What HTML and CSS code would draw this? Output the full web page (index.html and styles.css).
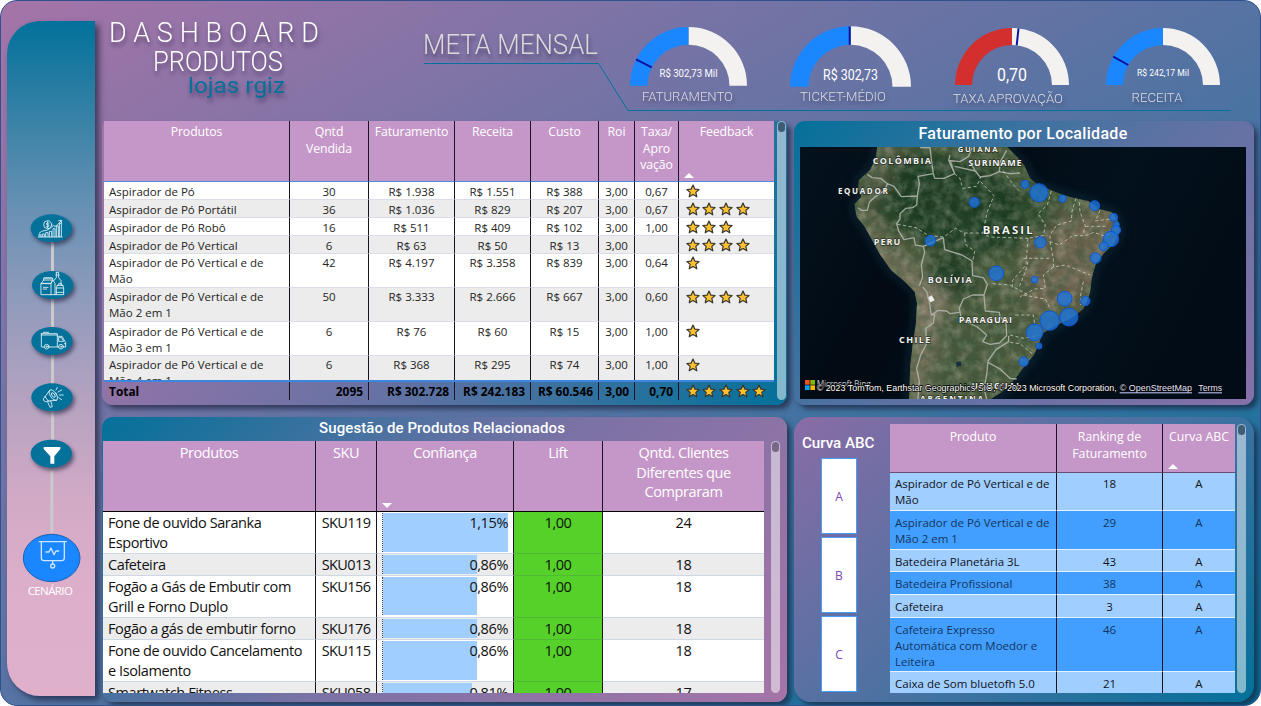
FILE: index.html
```html
<!DOCTYPE html>
<html lang="pt-BR">
<head>
<meta charset="utf-8">
<title>Dashboard Produtos</title>
<link rel="stylesheet" href="styles.css">
</head>
<body>
<svg class="defs" width="0" height="0" aria-hidden="true">
  <symbol id="star" viewBox="0 0 14 14"><path d="M7 1 8.800 5.100 13.100 5.500 9.800 8.400 10.800 12.800 7 10.500 3.200 12.800 4.200 8.400.9 5.500 5.200 5.100Z" fill="#fdc02f" stroke="#37352f" stroke-width="1.2" stroke-linejoin="round"/></symbol>
</svg>
<div class="board">
  <nav class="side">
    <svg width="88" height="52" viewBox="21 612 264 156"><path class="link" d="M157.500 700V768"/><g transform="translate(0 600)"><ellipse class="bub" cx="154" cy="85" rx="62" ry="42"/><g class="ico"><circle cx="143" cy="74" r="12"/><path d="M147 70q-4-4-7 0t3 4 3 5-7 0M143 65v18M117 100q8-8 15-8t12-3 16-12l8 2 15-16M176 62l9-1-1 9M117 110v-6h6v6M127 110v-8h6v8M137 110v-12h7v12M148 110V94h7v16M159 110V86h6v24M169 110V78h6v32M178 110V70h6v40M115 111h71"/></g></g></svg>
    <svg width="88" height="56" viewBox="21 768 264 168"><path class="link" d="M157.500 768V936"/><g transform="translate(0 600)"><ellipse class="bub" cx="158" cy="255" rx="62" ry="42"/><g class="ico"><path d="M124 250l7-10h27l-5 10zM124 250h29v34h-29zM153 250l5-10 7 10v34h-12M131 240v-6h27v6M134 234h20M130 262h14M130 267h10M169 217h7v16l7 9v12M169 217v16l-8 9M168 225h9M172 256h17M172 256l-3 7v21h22v-21l-3-7M170 264h21M170 277h21M176 256v-5h9v5M165 284h4"/></g></g></svg>
    <svg width="88" height="56" viewBox="21 936 264 168"><path class="link" d="M157.500 936V1104"/><g transform="translate(0 600)"><ellipse class="bub" cx="156" cy="423" rx="62" ry="42"/><g class="ico"><path d="M124 401h48v40h-24M133 441h-9v-40M124 405h48M130 397h16M172 409h14l8 14 3 4v14h-6M172 441h4M177 413h8l6 11h-14zM193 431h4"/><circle cx="140" cy="440" r="7"/><circle cx="140" cy="440" r="2"/><circle cx="183" cy="440" r="7"/><circle cx="183" cy="440" r="2"/></g></g></svg>
    <svg width="88" height="57" viewBox="21 1104 264 171"><path class="link" d="M157.500 1104V1275"/><g transform="translate(0 1110)"><ellipse class="bub" cx="156" cy="82" rx="62" ry="42"/><g class="ico"><ellipse cx="160" cy="75" rx="9" ry="18" transform="rotate(-35 160 75)"/><ellipse cx="160" cy="75" rx="4" ry="8" transform="rotate(-35 160 75)"/><path d="M149 61L135 80M170 91l-24 2M135 80q-8 6-4 12t15 1M135 80l10 13M143 96l7 16 7-2-5-17M168 60l4-8M174 66l11-6M178 75h12M176 83l9 6"/></g></g></svg>
    <svg width="88" height="61" viewBox="21 1275 264 183"><path class="link" d="M157.500 1275V1320M155.500 1412V1458"/><g transform="translate(0 1110)"><ellipse class="bub" cx="154" cy="251" rx="62" ry="42"/><path d="M131 231h50v6l-18 22v22h-12v-22l-20-22z" fill="#fff"/></g></svg>
    <svg width="88" height="98" viewBox="21 1458 264 294"><path class="link" d="M155.500 1458V1598"/><g transform="translate(0 1110)"><ellipse class="bub on" cx="155" cy="564" rx="85" ry="71"/><g class="ico big"><path d="M118 515h81M124 515v49q0 8 8 8h53q8 0 8-8v-49M138 546h9l6-12 9 20 6-11h8M158 572v10"/><circle cx="158" cy="588" r="6"/></g></g></svg>
    <span>CENÁRIO</span>
  </nav>

  <header class="top">
    <svg class="brand" width="322" height="121" viewBox="102 0 322 121">
      <text x="109" y="42" textLength="210" font-size="27">DASHBOARD</text>
      <text x="153" y="70.500" textLength="130" lengthAdjust="spacingAndGlyphs" font-size="27">PRODUTOS</text>
      <text class="shop" x="188" y="93" textLength="97" lengthAdjust="spacingAndGlyphs" font-size="22.500">lojas rgiz</text>
    </svg>
    <svg class="brand" width="200" height="121" viewBox="424 0 200 121"><text class="meta" x="423" y="53.500" textLength="175" lengthAdjust="spacingAndGlyphs" font-size="27">META MENSAL</text></svg>
    <svg width="146" height="121" viewBox="624 0 146 121">
      <path fill="#f3f2f1" d="M688.500 27A58.500 58.500 0 0 1 747 85.700H729.500A41 41 0 0 0 688.500 44.700Z"/>
      <path fill="#1a86ff" d="M630 85.700A58.500 58.500 0 0 1 688.500 27V44.700A41 41 0 0 0 647.500 85.700Z"/>
      <path class="goal" d="M636 59.300 651.700 67.300"/>
      <text class="val" x="659.500" y="76.500" textLength="58" lengthAdjust="spacingAndGlyphs" font-size="10.500">R$ 302,73 Mil</text>
      <text class="cap" x="642" y="101" textLength="91" lengthAdjust="spacingAndGlyphs">FATURAMENTO</text>
    </svg>
    <svg width="160" height="121" viewBox="770 0 160 121">
      <path fill="#f3f2f1" d="M850.500 26.200A60.500 60.500 0 0 1 911 86.700H892.500A42 42 0 0 0 850.500 44.700Z"/>
      <path fill="#1a86ff" d="M790 86.700A60.500 60.500 0 0 1 850.500 26.200V44.700A42 42 0 0 0 808.500 86.700Z"/>
      <path class="goal" d="M849.700 26.500V44.700"/>
      <text class="val" x="823" y="80" textLength="55" lengthAdjust="spacingAndGlyphs" font-size="14">R$ 302,73</text>
      <text class="cap" x="800" y="101" textLength="86" lengthAdjust="spacingAndGlyphs">TICKET-MÉDIO</text>
    </svg>
    <svg width="155" height="121" viewBox="930 0 155 121">
      <path fill="#f3f2f1" d="M1012 28A57 57 0 0 1 1069 85H1052A40 40 0 0 0 1012 45Z"/>
      <path fill="#d32f2f" d="M955 85A57 57 0 0 1 1012 28V45A40 40 0 0 0 972 85Z"/>
      <path class="goal" d="M1018.500 28.500 1016.700 45.300"/>
      <text class="val" x="997" y="81" textLength="30" lengthAdjust="spacingAndGlyphs" font-size="18.500">0,70</text>
      <text class="cap" x="953" y="103" textLength="110" lengthAdjust="spacingAndGlyphs">TAXA APROVAÇÃO</text>
    </svg>
    <svg width="145" height="121" viewBox="1085 0 145 121">
      <path fill="#f3f2f1" d="M1163 28A57 57 0 0 1 1220 85H1203A40 40 0 0 0 1163 45Z"/>
      <path fill="#1a86ff" d="M1106 85A57 57 0 0 1 1163 28V45A40 40 0 0 0 1123 85Z"/>
      <path class="goal" d="M1113.300 56.700 1128.300 65"/>
      <text class="val" x="1137" y="76" textLength="52" lengthAdjust="spacingAndGlyphs" font-size="9.500">R$ 242,17 Mil</text>
      <text class="cap" x="1131.500" y="102" textLength="51" lengthAdjust="spacingAndGlyphs">RECEITA</text>
    </svg>
    <svg class="rule" width="810" height="50" viewBox="424 62 810 50"><path d="M424 63.500H598.500L628 110.500H1231" fill="none" stroke="#05719b"/></svg>
  </header>

  <section class="panel p1">
    <div class="tablebox">
      <table class="t1 head">
        <colgroup><col class="a1"><col class="a2"><col class="a3"><col class="a4"><col class="a5"><col class="a6"><col class="a7"><col class="a8"></colgroup>
        <tr><th>Produtos</th><th>Qntd<br>Vendida</th><th>Faturamento</th><th>Receita</th><th>Custo</th><th>Roi</th><th>Taxa/<br>Apro<br>vação</th><th class="sorted">Feedback<i class="up"></i></th></tr>
      </table>
      <div class="scroll">
      <table class="t1">
        <colgroup><col class="a1"><col class="a2"><col class="a3"><col class="a4"><col class="a5"><col class="a6"><col class="a7"><col class="a8"></colgroup>
        <tr class="h18"><td>Aspirador de Pó</td><td>30</td><td>R$ 1.938</td><td>R$ 1.551</td><td>R$ 388</td><td>3,00</td><td>0,67</td><td><div class="stars"><svg><use href="#star"/></svg></div></td></tr>
        <tr class="h18"><td>Aspirador de Pó Portátil</td><td>36</td><td>R$ 1.036</td><td>R$ 829</td><td>R$ 207</td><td>3,00</td><td>0,67</td><td><div class="stars"><svg><use href="#star"/></svg><svg><use href="#star"/></svg><svg><use href="#star"/></svg><svg><use href="#star"/></svg></div></td></tr>
        <tr class="h18"><td>Aspirador de Pó Robô</td><td>16</td><td>R$ 511</td><td>R$ 409</td><td>R$ 102</td><td>3,00</td><td>1,00</td><td><div class="stars"><svg><use href="#star"/></svg><svg><use href="#star"/></svg><svg><use href="#star"/></svg></div></td></tr>
        <tr class="h18"><td>Aspirador de Pó Vertical</td><td>6</td><td>R$ 63</td><td>R$ 50</td><td>R$ 13</td><td>3,00</td><td></td><td><div class="stars"><svg><use href="#star"/></svg><svg><use href="#star"/></svg><svg><use href="#star"/></svg><svg><use href="#star"/></svg></div></td></tr>
        <tr class="h34"><td>Aspirador de Pó Vertical e de<br>Mão</td><td>42</td><td>R$ 4.197</td><td>R$ 3.358</td><td>R$ 839</td><td>3,00</td><td>0,64</td><td><div class="stars"><svg><use href="#star"/></svg></div></td></tr>
        <tr class="h33"><td>Aspirador de Pó Vertical e de<br>Mão 2 em 1</td><td>50</td><td>R$ 3.333</td><td>R$ 2.666</td><td>R$ 667</td><td>3,00</td><td>0,60</td><td><div class="stars"><svg><use href="#star"/></svg><svg><use href="#star"/></svg><svg><use href="#star"/></svg><svg><use href="#star"/></svg></div></td></tr>
        <tr class="h34 low"><td>Aspirador de Pó Vertical e de<br>Mão 3 em 1</td><td>6</td><td>R$ 76</td><td>R$ 60</td><td>R$ 15</td><td>3,00</td><td>1,00</td><td><div class="stars"><svg><use href="#star"/></svg></div></td></tr>
        <tr class="h34"><td>Aspirador de Pó Vertical e de<br>Mão 4 em 1</td><td>6</td><td>R$ 368</td><td>R$ 295</td><td>R$ 74</td><td>3,00</td><td>1,00</td><td><div class="stars"><svg><use href="#star"/></svg></div></td></tr>
      </table>
      </div>
      <table class="t1 total">
        <colgroup><col class="a1"><col class="a2"><col class="a3"><col class="a4"><col class="a5"><col class="a6"><col class="a7"><col class="a8"></colgroup>
        <tr><td>Total</td><td>2095</td><td>R$ 302.728</td><td>R$ 242.183</td><td>R$ 60.546</td><td>3,00</td><td>0,70</td><td><div class="stars"><svg><use href="#star"/></svg><svg><use href="#star"/></svg><svg><use href="#star"/></svg><svg><use href="#star"/></svg><svg><use href="#star"/></svg></div></td></tr>
      </table>
    </div>
    <div class="bar"><b></b></div>
  </section>

  <section class="panel p2">
    <h2>Faturamento por Localidade</h2>
    <svg class="map" width="446" height="252" viewBox="30 96 1338 756">
      <defs>
        <linearGradient id="sea" x1="0" x2="1" y1="0" y2=".3"><stop offset="0" stop-color="#04121d"/><stop offset=".35" stop-color="#020a13"/><stop offset=".7" stop-color="#03111c"/><stop offset="1" stop-color="#020c16"/></linearGradient>
        <clipPath id="land"><path id="coast" d="M262 90 258 130 240 165 207 195 204 222 214 245 193 268 200 305 222 332 245 372 268 415 303 465 345 500 374 530 381 565 378 625 368 690 361 750 357 860H590L640 828 675 792 700 758 730 722 745 692 757 655 800 630 850 606 880 582 900 535 905 490 918 443 942 415 970 387 990 350 984 318 966 292 930 283 895 258 855 250 818 240 785 226 750 214 722 192 702 150 678 122 645 90Z"/></clipPath>
        <filter id="soft" x="-50%" y="-50%" width="200%" height="200%"><feGaussianBlur stdDeviation="24"/></filter>
        <filter id="shelf"><feGaussianBlur stdDeviation="12"/></filter>
        <filter id="grain" x="0" y="0" width="100%" height="100%"><feTurbulence type="fractalNoise" baseFrequency=".035" numOctaves="5" seed="6"/><feColorMatrix values="0 0 0 0 .62  0 0 0 0 .6  0 0 0 0 .47  1.300 0 0 0 -.5"/></filter>
        <filter id="shade" x="0" y="0" width="100%" height="100%"><feTurbulence type="fractalNoise" baseFrequency=".03" numOctaves="5" seed="15"/><feColorMatrix values="0 0 0 0 .04  0 0 0 0 .1  0 0 0 0 .05  0 2 0 0 -.75"/></filter>
      </defs>
      <rect x="30" y="96" width="1338" height="756" fill="url(#sea)"/>
      <use href="#coast" fill="none" stroke="#16394a" stroke-width="26" filter="url(#shelf)" opacity=".45"/>
      <g clip-path="url(#land)">
        <rect x="180" y="90" width="830" height="770" fill="#4c5a3b"/>
        <g filter="url(#soft)">
          <path fill="#1f3a22" d="M280 130 420 110 640 170 700 250 690 400 560 420 430 400 340 350 250 290Z"/>
          <path fill="#1f3b22" d="M430 420 540 430 560 520 480 560 420 490Z"/>
          <path fill="#77715a" d="M200 270 300 400 400 480 440 600 400 860H350L370 560 240 420Z"/>
          <path fill="#827965" d="M390 500 480 540 440 700 370 620Z"/>
          <path fill="#6b624b" d="M780 300 980 280 1000 360 900 560 720 600 700 460Z"/>
          <path fill="#46583a" d="M440 600 720 600 640 850 440 850Z"/>
          <path fill="#575d46" d="M260 100 330 100 270 250 210 260Z"/>
          <path fill="#2d4a2b" d="M700 180 800 230 800 340 700 380Z"/>
        </g>
        <rect x="180" y="90" width="830" height="770" filter="url(#shade)" opacity=".6"/>
        <rect x="180" y="90" width="830" height="770" filter="url(#grain)" opacity=".5"/>
        <path d="M412 548 425 541 434 556 422 562Z" fill="#eceeea"/>
        <path d="M498 742 512 738 514 753 500 755Z" fill="#17323c"/>
      </g>
      <g class="border">
        <path d="M232 178 246 188 272 190 292 206 284 226 252 248 238 262 232 286 214 286 204 278M292 206 312 214 334 245 382 243 380 270 368 278 348 280 330 296 330 312 320 326 326 348 342 374 372 368 376 390 400 394M382 243 388 206 384 184 430 176 434 190 462 190 494 176 476 136 480 120M430 176 426 150 420 98H390M476 136 510 140 536 124 546 98M480 136 494 176M494 154 556 168 570 186 600 182 628 170 660 176 690 174M556 168 540 142M628 170 630 142 650 106M400 394 460 368M460 368 464 404 516 420 546 438 548 482 580 488 592 508 582 540 586 588 628 592 630 606 648 622 650 662 628 684 600 688 578 680 590 660 562 636 514 612 508 580 520 552 548 540 582 540M400 394 404 412 394 450 398 486 388 512M398 516 410 530 418 560 424 600 434 598 430 624 408 640 408 690 392 720 380 760 388 800 384 852M424 600 444 586 470 588 480 596 508 592M656 662 656 680 618 704 594 738 590 780 582 820 590 852M594 742 630 762 660 790 680 792"/>
      </g>
      <g class="state">
        <path d="M322 328 378 338 416 362 462 366 496 340 524 354 578 354M494 176 510 190 518 220 560 214 572 186M572 200 612 242 592 290 578 354 600 366 714 370M524 354 526 388 554 408 548 440M714 370 708 450 668 496 666 520M608 506 660 510 714 540M640 168 672 212 690 230M784 228 772 270 744 296 766 330 760 362 712 370M858 250 846 290 844 318 800 330 780 360 780 380 808 390 848 362 878 362 886 334 870 290 868 258M886 334 948 334M886 362 912 352 940 362 960 356M930 286 916 318 960 312M780 380 790 430 790 456 826 450 900 480M790 456 760 480 766 520 734 522 690 545M700 430 780 430M714 440 706 470 686 520M880 500 872 540 872 570M700 540 766 552 780 580M676 600 730 600 734 630M660 660 700 670 748 660M660 682 690 686 726 716"/>
      </g>
      <g class="place">
        <text x="503" y="111" textLength="120" font-size="23">GUIANA</text>
        <text x="248" y="147" textLength="175">COLÔMBIA</text>
        <text x="535" y="154" textLength="160">SURINAME</text>
        <text x="144" y="236" textLength="149" font-size="24">EQUADOR</text>
        <text x="578" y="356" textLength="150" font-size="34">BRASIL</text>
        <text x="251" y="391" textLength="80">PERU</text>
        <text x="413" y="503" textLength="132">BOLÍVIA</text>
        <text x="506" y="623" textLength="160">PARAGUAI</text>
        <text x="327" y="683" textLength="94">CHILE</text>
        <text x="545" y="822" textLength="142" font-size="24">URUGUAI</text>
        <text x="390" y="860" textLength="190" font-size="25">ARGENTINA</text>
      </g>
      <g class="spots">
        <circle cx="705" cy="208" r="12"/><circle cx="553" cy="262" r="15"/><circle cx="421" cy="377" r="16"/><circle cx="619" cy="475" r="22"/><circle cx="701" cy="740" r="14"/><circle cx="747" cy="233" r="27"/><circle cx="818" cy="251" r="11"/><circle cx="914" cy="272" r="15"/><circle cx="971" cy="307" r="12"/><circle cx="979" cy="329" r="9"/><circle cx="978" cy="345" r="14"/><circle cx="963" cy="372" r="23"/><circle cx="941" cy="394" r="13"/><circle cx="917" cy="429" r="16"/><circle cx="751" cy="382" r="17"/><circle cx="734" cy="494" r="10"/><circle cx="824" cy="551" r="22"/><circle cx="886" cy="558" r="14"/><circle cx="837" cy="606" r="27"/><circle cx="779" cy="617" r="29"/><circle cx="734" cy="652" r="25"/><circle cx="747" cy="693" r="9"/>
      </g>
      <path fill="#f25022" d="M45 795h14v14H45z"/><path fill="#7fba00" d="M61 795h14v14H61z"/><path fill="#00a4ef" d="M45 811h14v14H45z"/><path fill="#ffb900" d="M61 811h14v14H61z"/>
      <text class="bing" x="80" y="817" textLength="162">Microsoft Bing</text>
      <g class="credit">
        <text x="80" y="828" textLength="900" lengthAdjust="spacingAndGlyphs">© 2023 TomTom, Earthstar Geographics SIO, © 2023 Microsoft Corporation,</text>
        <text class="lk" x="989" y="828" textLength="217" lengthAdjust="spacingAndGlyphs">© OpenStreetMap</text>
        <text class="lk" x="1225" y="828" textLength="71" lengthAdjust="spacingAndGlyphs">Terms</text>
        <path d="M989 833.500H1206M1225 833.500H1296" stroke="#c9d0ff" stroke-width="3"/>
      </g>
    </svg>
  </section>

  <section class="panel p3">
    <h2>Sugestão de Produtos Relacionados</h2>
    <div class="row">
      <div class="tablebox">
        <table class="t2 head">
          <colgroup><col class="b1"><col class="b2"><col class="b3"><col class="b4"><col class="b5"></colgroup>
          <tr><th>Produtos</th><th>SKU</th><th class="sorted">Confiança<i class="down"></i></th><th>Lift</th><th>Qntd. Clientes<br>Diferentes que<br>Compraram</th></tr>
        </table>
        <div class="scroll">
        <table class="t2">
          <colgroup><col class="b1"><col class="b2"><col class="b3"><col class="b4"><col class="b5"></colgroup>
          <tr class="h42 low"><td>Fone de ouvido Saranka<br>Esportivo</td><td>SKU119</td><td><div class="meter" style="--w:126px">1,15%</div></td><td>1,00</td><td>24</td></tr>
          <tr class="h22"><td>Cafeteira</td><td>SKU013</td><td><div class="meter" style="--w:94px">0,86%</div></td><td>1,00</td><td>18</td></tr>
          <tr class="h41"><td>Fogão a Gás de Embutir com<br>Grill e Forno Duplo</td><td>SKU156</td><td><div class="meter" style="--w:94px">0,86%</div></td><td>1,00</td><td>18</td></tr>
          <tr class="h22"><td>Fogão a gás de embutir forno</td><td>SKU176</td><td><div class="meter" style="--w:94px">0,86%</div></td><td>1,00</td><td>18</td></tr>
          <tr class="h42"><td>Fone de ouvido Cancelamento<br>e Isolamento</td><td>SKU115</td><td><div class="meter" style="--w:94px">0,86%</div></td><td>1,00</td><td>18</td></tr>
          <tr class="h22"><td>Smartwatch Fitness</td><td>SKU058</td><td><div class="meter" style="--w:89px">0,81%</div></td><td>1,00</td><td>17</td></tr>
        </table>
        </div>
      </div>
      <div class="bar"><b></b></div>
    </div>
  </section>

  <section class="panel p4">
    <aside>
      <h2>Curva ABC</h2>
      <button>A</button><button>B</button><button>C</button>
    </aside>
    <div class="tablebox">
      <table class="t3 head">
        <colgroup><col class="c1"><col class="c2"><col class="c3"></colgroup>
        <tr><th>Produto</th><th>Ranking de<br>Faturamento</th><th class="sorted">Curva ABC<i class="up"></i></th></tr>
      </table>
      <div class="scroll">
      <table class="t3">
        <colgroup><col class="c1"><col class="c2"><col class="c3"></colgroup>
        <tr class="h38"><td>Aspirador de Pó Vertical e de<br>Mão</td><td>18</td><td>A</td></tr>
        <tr class="h39"><td>Aspirador de Pó Vertical e de<br>Mão 2 em 1</td><td>29</td><td>A</td></tr>
        <tr class="h22"><td>Batedeira Planetária 3L</td><td>43</td><td>A</td></tr>
        <tr class="h23"><td>Batedeira Profissional</td><td>38</td><td>A</td></tr>
        <tr class="h23"><td>Cafeteira</td><td>3</td><td>A</td></tr>
        <tr class="h54"><td>Cafeteira Expresso<br>Automática com Moedor e<br>Leiteira</td><td>46</td><td>A</td></tr>
        <tr class="h22"><td>Caixa de Som bluetofh 5.0</td><td>21</td><td>A</td></tr>
      </table>
      </div>
    </div>
    <div class="bar"><b></b></div>
  </section>
</div>
</body>
</html>
```
FILE: styles.css
```css
* { box-sizing: border-box; }
body { margin: 0; background: #fff; font-family: "Open Sans", "Noto Sans", sans-serif; }
.defs { position: absolute; }
.board {
  width: 1261px; height: 706px; overflow: hidden;
  border: 1px solid #2f528f; border-radius: 17px;
  background: linear-gradient(to bottom right, #a574a8, #5673a3 50%, #03719a);
  display: grid;
  grid-template-columns: 94px 685px 460px;
  grid-template-rows: 120px 284px 285px;
  column-gap: 7px; row-gap: 0;
}
.board svg { display: block; }

/* sidebar */
.side {
  grid-row: 1 / 4; margin: 20px 0 0 6px; width: 88px; height: 675px;
  padding-top: 183px; border-radius: 33px 0 0 33px;
  background: linear-gradient(#02719b, #2f7fa4 12%, #6590b3 27%, #8f9bbc 41%, #b4a2c0 56%, #d2aac6 71%, #deafca 86%, #e0b0cb);
  box-shadow: 4px 4px 6px rgba(20, 25, 50, .65);
}
.side svg { overflow: visible; }
.side span { display: block; width: 86px; text-align: center; color: #fff; font-size: 11.5px; line-height: 14px; letter-spacing: -.6px; }
.link { stroke: #cacacb; stroke-width: 9; fill: none; }
.bub { fill: #04719b; filter: drop-shadow(6px 9px 6px rgba(30, 30, 60, .6)); }
.bub.on { fill: #1a86ff; stroke: #1b62b5; stroke-width: 3; filter: none; }
.ico { fill: none; stroke: #e4f2f7; stroke-width: 2.6; stroke-linecap: round; stroke-linejoin: round; }
.ico.big { stroke-width: 4; stroke: #cfe5ff; }

/* header */
.top { grid-column: 2 / 4; display: flex; position: relative; margin: -1px 0 0 0; height: 121px; }
.top svg { flex: none; overflow: visible; }
.rule { position: absolute; left: 322px; top: 62px; }
.top text { font-family: Roboto, sans-serif; font-weight: 300; fill: #fff; }
.brand text { filter: drop-shadow(1px 4px 2px rgba(40, 30, 70, .55)); }
.brand .shop { fill: #05719b; font-weight: 400; }
.brand .meta { fill: #dadada; }
.top .val { font-weight: 400; }
.top .cap { fill: #dcdde2; font-size: 13px; filter: drop-shadow(1px 3px 2px rgba(40, 30, 70, .5)); }
.goal { stroke: #0b14a0; stroke-width: 2; }

/* panels */
.panel { border-radius: 11px; box-shadow: 4px 4px 5px rgba(25, 30, 55, .65); display: flex; }
.p1 { background: linear-gradient(115deg, #a574a8, #6572a4 50%, #03719a); padding-left: 2px; height: 284px; border-radius: 6px 6px 11px 11px; }
.p2 { background: linear-gradient(135deg, #03719a, #5b72a3 50%, #8770a8); height: 284px; flex-direction: column; align-items: flex-start; padding-left: 6px; }
.p3 { background: linear-gradient(135deg, #03719a, #7b72a5 50%, #a574a8); margin-top: 12px; height: 285px; flex-direction: column; padding-left: 1px; }
.p4 { background: linear-gradient(135deg, #8a6ca6, #4a72a2 50%, #03719a); margin-top: 12px; height: 285px; padding-top: 7px; border-radius: 17px; }
h2 { margin: 0; color: #fff; font: 500 16px/24px Roboto, sans-serif; text-align: center; letter-spacing: -.05px; }
.p2 h2 { width: 446px; height: 26px; letter-spacing: .32px; padding-top: 1px; }
.p3 h2 { width: 678px; height: 24px; font-size: 15px; line-height: 22px; letter-spacing: .1px; }
.row { display: flex; }
.bar { width: 9px; border-radius: 5px; background: rgba(255, 255, 255, .5); }
.bar b { display: block; width: 7px; height: 10px; margin: 1px; border-radius: 4px; background: rgba(40, 70, 95, .8); }
.p1 .bar { height: 279px; margin-left: 3px; }
.p3 .bar { height: 252px; margin-left: 7px; }
.p3 .bar b { background: #786885; }
.p4 .bar { height: 269px; margin-left: 2px; }

/* map */
.border path { fill: none; stroke: #b4b8b0; stroke-width: 4; stroke-linejoin: round; opacity: .85; }
.state path { fill: none; stroke: #d8d9c8; stroke-width: 2.6; stroke-dasharray: 10 7; opacity: .8; }
.place { fill: #f4f4f2; font: 700 27px "Open Sans", sans-serif; paint-order: stroke; stroke: rgba(20, 25, 20, .7); stroke-width: 4px; }
.spots circle { fill: #1b76e2; fill-opacity: .76; stroke: #0f57d8; stroke-width: 3; }
.bing { fill: #c4c8c8; font: 25px "Open Sans", sans-serif; }
.credit text { fill: #fff; font: 27px "Liberation Sans", sans-serif; paint-order: stroke; stroke: #000; stroke-width: 4px; }
.credit .lk { fill: #e3e6ff; }

/* tables */
table { border-collapse: separate; border-spacing: 0; table-layout: fixed; }
th, td { padding: 1px 0 0; vertical-align: top; text-align: center; border-right: 1px solid #1b1420; overflow: visible; white-space: nowrap; }
th:last-child, td:last-child { border-right: 0; }
th { background: #c597c8; color: #fff; font-weight: 400; position: relative; }
td:first-child { text-align: left; padding-left: 5px; }
.scroll { overflow: hidden; }
.up, .down { position: absolute; bottom: 3px; left: 5px; border: 5px solid transparent; border-top: 0; border-bottom: 5px solid #fff; }
.down { border-bottom: 0; border-top: 5px solid #fff; }
.h18 { height: 18px; } .h22 { height: 22px; } .h23 { height: 23px; } .h33 { height: 33px; } .h34 { height: 34px; }
.h38 { height: 38px; } .h39 { height: 39px; } .h41 { height: 41px; } .h42 { height: 42px; } .h54 { height: 54px; }

.t1 { width: 670px; font-size: 11.5px; line-height: 16px; color: #252423; }
.a1 { width: 186px; } .a2 { width: 79px; } .a3 { width: 86px; } .a4 { width: 76px; } .a5 { width: 68px; } .a6 { width: 36px; } .a7 { width: 44px; } .a8 { width: 95px; }
.t1 th { height: 61px; padding-top: 3px; font-size: 12.3px; line-height: 16.5px; border-bottom: 1px solid #4d8be8; letter-spacing: -.1px; }
.t1 td { border-bottom: 1px solid #dcdce8; }
.t1 .h18 td { padding-top: 2px; line-height: 15px; }
.t1 .low td { padding-top: 2px; line-height: 15.5px; }
.t1 tr { background: #fff; }
.t1 tr:nth-child(even) { background: #ececec; }
.p1 .scroll { height: 198px; }
.total { border-top: 2px solid #3d86e0; font-weight: 700; }
.t1.total tr { background: none; height: 18px; }
.t1.total td { color: #000; border-bottom: 0; text-align: right; padding-right: 5px; font-size: 11.9px; }
.t1.total td:nth-child(n+5):nth-child(-n+6) { padding-right: 5px; }
.t1.total td:first-child { text-align: left; }
.stars { display: flex; gap: 2.7px; padding: 1px 0 0 6.5px; }
.h18 .stars, .low .stars { padding-top: 0; }
.stars svg { width: 14px; height: 14px; flex: none; }

.t2 { width: 661px; font-size: 14.5px; line-height: 20px; color: #111; letter-spacing: -.4px; }
.b1 { width: 213px; } .b2 { width: 61px; } .b3 { width: 137px; } .b4 { width: 89px; } .b5 { width: 161px; }
.t2 th { height: 71px; padding-top: 2px; line-height: 19.5px; border-bottom: 1px solid #000; }
.t2 td { border-bottom: 1px solid #cfd6e4; }
.t2 td:nth-child(2) { letter-spacing: -.6px; }
.t2 tr { background: #fff; }
.t2 tr:nth-child(even) { background: #ececec; }
.t2 td:nth-child(4) { background: #55d12a; border-bottom-color: #50b935; }
.t2 td:nth-child(3) { padding: 1px 5px 1px 5px; height: inherit; }
.meter { height: 100%; min-height: 18px; text-align: right; border-left: 1px dotted #444; background: linear-gradient(#a0ceff, #a0ceff) no-repeat 0 0 / var(--w) 100%; }
.h42 .meter { height: 39px; } .h41 .meter { height: 38px; } .h22 .meter { height: 19px; }
.p3 .scroll { height: 181px; }

.t3 { width: 345px; font-size: 11.5px; line-height: 16px; color: #10131a; }
.c1 { width: 167px; } .c2 { width: 106px; } .c3 { width: 72px; }
.t3 th { height: 49px; padding-top: 4px; font-size: 12.3px; line-height: 17px; border-bottom: 1px solid #6b4c74; }
.t3 td { padding-top: 4px; border-bottom: 1px solid #e6f2ff; }
.t3 .h38 td { padding-top: 3px; }
.t3 tr { background: #a0ceff; }
.t3 tr:nth-child(even) { background: #429eff; color: #12365c; }
.p4 .scroll { height: 220px; }
.p4 aside { width: 96px; padding-top: 6px; display: flex; flex-direction: column; gap: 3px; align-items: flex-start; }
.p4 h2 { margin: 1px 0 0 8px; height: 24px; font-size: 15.2px; white-space: nowrap; }
button { display: block; width: 36px; height: 76px; margin-left: 27px; padding: 0; background: #fff; border: 1.5px solid #4b9cf5; border-radius: 0; color: #7a45b8; font: 12px "Open Sans", sans-serif; }
```
